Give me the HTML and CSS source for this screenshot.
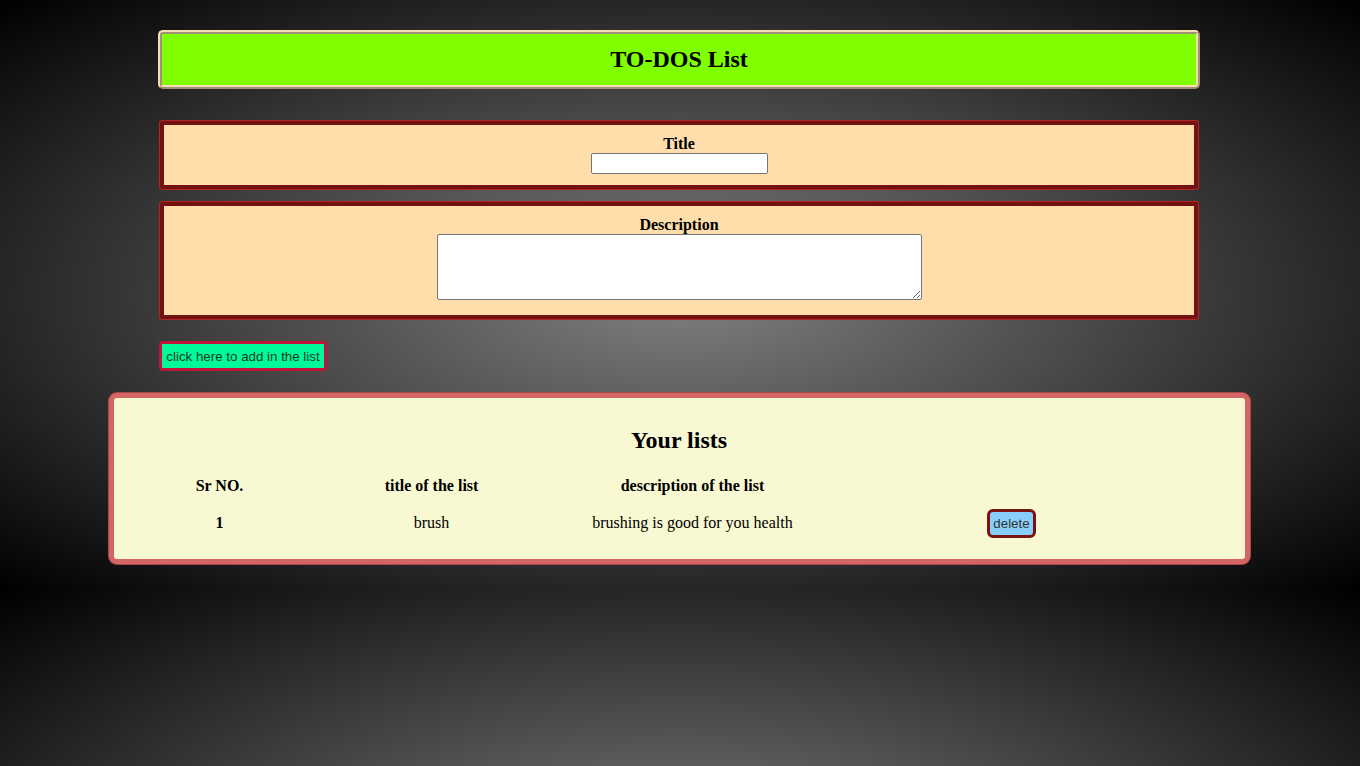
FILE: index.html
```html
<!DOCTYPE html>
<html lang="en">
<head>
<meta charset="utf-8">
<title>TO-DOS List</title>
<link rel="stylesheet" href="styles.css">
</head>
<body>
<div class="page">
  <header class="banner">
    <h1 class="banner-title">TO-DOS List</h1>
  </header>
  <form class="todo-form">
    <div class="field field-title">
      <label class="field-label" for="title">Title</label>
      <input class="title-input" id="title" type="text">
    </div>
    <div class="field field-desc">
      <label class="field-label" for="desc">Description</label>
      <textarea class="desc-input" id="desc"></textarea>
    </div>
    <button class="add-btn" type="button">click here to add in the list</button>
  </form>
</div>
<section class="lists">
  <h2 class="lists-title">Your lists</h2>
  <table class="lists-table">
    <colgroup>
      <col class="c1"><col class="c2"><col class="c3"><col class="c4">
    </colgroup>
    <thead>
      <tr><th>Sr NO.</th><th>title of the list</th><th>description of the list</th><th></th></tr>
    </thead>
    <tbody>
      <tr><th>1</th><td>brush</td><td>brushing is good for you health</td><td><button class="del-btn" type="button">delete</button></td></tr>
    </tbody>
  </table>
</section>
</body>
</html>
```
FILE: styles.css
```css
html {
  background-color: #000;
  background-image: radial-gradient(#808080, #000);
  background-size: 100% 590px;
  background-repeat: repeat-y;
  min-height: 100%;
}
body {
  margin: 0;
  min-height: 766px;
  font-family: "Liberation Serif", "Times New Roman", serif;
  color: #000;
}
.page {
  width: 1042px;
  margin: 30px auto 0;
  padding-right: 2px;
}
.banner {
  height: 51px;
  border: 4px ridge #f5deb3;
  border-radius: 5px;
  background: #7fff00;
  display: flex;
  align-items: center;
  justify-content: center;
}
.banner-title {
  margin: 0 0 1px;
  font-size: 24px;
  font-weight: bold;
  line-height: 28px;
}
.todo-form {
  margin-top: 32px;
  display: flex;
  flex-direction: column;
  align-items: flex-start;
}
.field {
  box-sizing: border-box;
  width: 1038px;
  margin-left: 2px;
  border: 4px solid #741212;
  box-shadow: 0 0 0 1px #b02626;
  border-radius: 2px;
  background: #ffdeac;
  display: flex;
  flex-direction: column;
  align-items: center;
}
.field-title {
  height: 68px;
  padding-top: 10px;
}
.field-desc {
  margin-top: 13px;
  height: 117px;
  padding-top: 10px;
}
.field-label {
  font-weight: bold;
  font-size: 16px;
  line-height: 18px;
}
.title-input {
  margin-top: 0;
  box-sizing: border-box;
  width: 177px;
  height: 21px;
  border: 1px solid #767676;
  border-radius: 2px;
  background: #fff;
  padding: 1px 2px;
}
.desc-input {
  margin-top: 0;
  box-sizing: border-box;
  width: 485px;
  height: 66px;
  border: 1px solid #767676;
  border-radius: 2px;
  background: #fff;
  resize: both;
}
.add-btn {
  margin-top: 22px;
  margin-left: 1px;
  box-sizing: border-box;
  width: 168px;
  height: 30px;
  padding: 0;
  border: 3px solid #c0143c;
  border-radius: 4px;
  background: #00fa9a;
  color: #143a22;
  font-family: "Liberation Sans", Arial, sans-serif;
  font-size: 13.333px;
}
.lists {
  box-sizing: border-box;
  width: 1141px;
  height: 171px;
  margin: 22px auto 0;
  position: relative;
  left: -1px;
  border: 5px solid #d36565;
  box-shadow: 0 0 0 1px #a54848;
  border-radius: 8px;
  background: #f8f9d2;
  padding-top: 28px;
}
.lists-title {
  margin: 0;
  text-align: center;
  font-size: 24px;
  line-height: 28px;
  font-weight: bold;
}
.lists-table {
  margin-top: 21px;
  margin-left: 45px;
  border-collapse: collapse;
  table-layout: fixed;
  width: 1012px;
}
.c1 { width: 122px; }
.c2 { width: 302px; }
.c3 { width: 220px; }
.c4 { width: 418px; }
.lists-table th,
.lists-table td {
  padding: 0;
  text-align: center;
  font-size: 16px;
  line-height: 18px;
}
.lists-table thead th {
  height: 22px;
}
.lists-table tbody th,
.lists-table tbody td {
  height: 52px;
}
.del-btn {
  box-sizing: border-box;
  width: 49px;
  height: 29px;
  padding: 0;
  border: 3px solid #7a1414;
  border-radius: 6px;
  background: #87cefa;
  color: #333;
  font-family: "Liberation Sans", Arial, sans-serif;
  font-size: 13.333px;
}
```
